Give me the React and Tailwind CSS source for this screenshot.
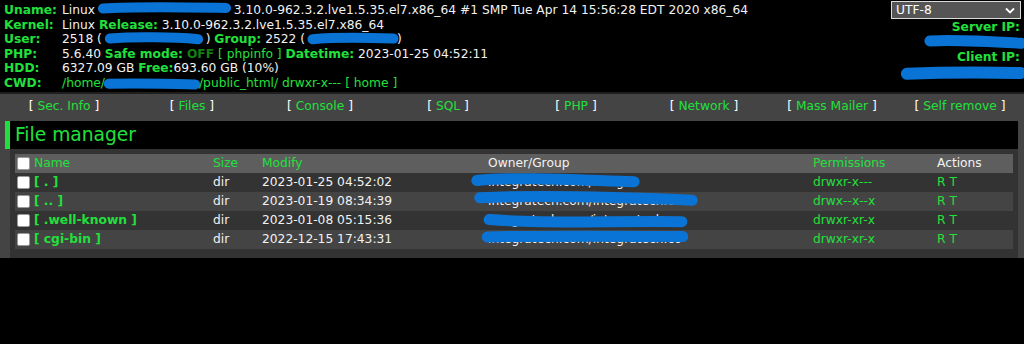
import React from 'react';

const NAV = ['Sec. Info', 'Files', 'Console', 'SQL', 'PHP', 'Network', 'Mass Mailer', 'Self remove'];

const ROWS = [
  { name: '[ . ]', date: '2023-01-25 04:52:02', perms: 'drwxr-x---', owner: 'integratech.com/integra', bg: 'bg-[#333333]', stroke: 'left-[-16px] top-[1px] w-[171px] h-[13px]', d: 'M4 50 C 30 20, 60 45, 96 60' },
  { name: '[ .. ]', date: '2023-01-19 08:34:39', perms: 'drwx--x--x', owner: 'integratech.com/integratech.co', bg: 'bg-[#444444]', stroke: 'left-[-13px] top-[1px] w-[226px] h-[12px]', d: 'M3 40 C 25 20, 60 30, 97 60' },
  { name: '[ .well-known ]', date: '2023-01-08 05:15:36', perms: 'drwxr-xr-x', owner: 'integratech.com/integratech.co', bg: 'bg-[#333333]', stroke: 'left-[-3px] top-[3px] w-[205px] h-[14px]', d: 'M3 40 C 30 70, 60 50, 97 55' },
  { name: '[ cgi-bin ]', date: '2022-12-15 17:43:31', perms: 'drwxr-xr-x', owner: 'integratech.com/integratech.co', bg: 'bg-[#444444]', stroke: 'left-[-5px] top-[2px] w-[208px] h-[9px]', d: 'M3 55 C 30 40, 60 45, 97 50' },
];

function Stroke({ className, d = 'M3 55 C 30 35, 65 45, 97 50', width = 10 }) {
  return (
    <svg className={className} viewBox="0 0 100 100" preserveAspectRatio="none">
      <path d={d} fill="none" stroke="#0a74d6" strokeWidth={width} strokeLinecap="round" vectorEffect="non-scaling-stroke" />
    </svg>
  );
}

function Box() {
  return <span className="inline-block w-[13px] h-[13px] bg-white border border-[#9a9a9a] rounded-[2px] shrink-0" />;
}

export default function App() {
  return (
    <div className="bg-black min-h-[344px] text-[12.25px] text-[#f2f2f2] font-['DejaVu_Sans',Verdana,sans-serif]">
      {/* info */}
      <div className="flex h-[94px] border-b-2 border-[#1e1e1e] leading-[14.6px] whitespace-nowrap">
        <div className="w-[62px] shrink-0 pl-[4px] pt-[3px] font-bold text-[#22e03c]">
          Uname:<br />Kernel:<br />User:<br />PHP:<br />HDD:<br />CWD:
        </div>
        <div className="flex-1 pt-[3px]">
          <div>
            Linux <Stroke className="inline-block align-top overflow-visible w-[131px] h-[11px]" d="M3 50 C 30 30, 70 40, 97 45" /> 3.10.0-962.3.2.lve1.5.35.el7.x86_64 #1 SMP Tue Apr 14 15:56:28 EDT 2020 x86_64
          </div>
          <div>
            Linux <b className="text-[#22e03c]">Release:</b> 3.10.0-962.3.2.lve1.5.35.el7.x86_64
          </div>
          <div>
            2518 ( <Stroke className="inline-block align-top overflow-visible w-[96px] h-[13px]" d="M4 50 C 30 35, 70 40, 96 55" /> ) <b className="text-[#22e03c]">Group:</b> 2522 ({' '}
            <Stroke className="inline-block align-top overflow-visible w-[88px] h-[13px]" d="M4 55 C 30 40, 70 45, 96 50" />)
          </div>
          <div>
            5.6.40 <b className="text-[#22e03c]">Safe mode:</b> <b className="text-[#167d16]">OFF</b> <span className="text-[#22e03c]">[ phpinfo ]</span>{' '}
            <b className="text-[#22e03c]">Datetime:</b> 2023-01-25 04:52:11
          </div>
          <div>
            6327.09 GB <b className="text-[#22e03c]">Free:</b>693.60 GB (10%)
          </div>
          <div className="text-[#22e03c]">
            /home/<Stroke className="inline-block align-top overflow-visible w-[94px] h-[14px]" d="M4 55 C 30 50, 70 55, 96 60" />/public_html/ drwxr-x--- [ home ]
          </div>
        </div>
        <div className="w-[140px] shrink-0 flex flex-col items-end pr-[3px] pt-[1px]">
          <div className="w-[130px] h-[18px] mb-[1px] bg-[#555555] border border-[#dcdcdc] flex items-center justify-between pl-[4px] pr-[5px] text-white">
            <span>UTF-8</span>
            <svg width="10" height="7" viewBox="0 0 10 7">
              <polyline points="1,1.5 5,5.5 9,1.5" fill="none" stroke="#fff" strokeWidth="1.8" />
            </svg>
          </div>
          <b className="text-[#22e03c] pr-[1px]">Server IP:</b>
          <Stroke className="w-[98px] h-[15px] -mr-[3px] overflow-visible" d="M4 40 C 30 30, 70 45, 97 55" width={11} />
          <b className="text-[#22e03c] pr-[1px]">Client IP:</b>
          <Stroke className="w-[122px] h-[15px] -mr-[3px] overflow-visible" d="M4 65 C 20 60, 60 55, 97 60" width={12} />
        </div>
      </div>

      {/* panel */}
      <div className="bg-[#444444]">
        <div className="grid grid-cols-8 h-[27px] items-center pb-[2px] text-center">
          {NAV.map((n) => (
            <div key={n}>
              <span className="text-white">[</span> <span className="text-[#22e03c]">{n}</span> <span className="text-white">]</span>
            </div>
          ))}
        </div>

        <div className="ml-[5px] mr-[6px] h-[28px] bg-black border-l-[5px] border-[#22e03c] pl-[5px] flex items-center text-[18.67px] text-[#22e03c]">
          File manager
        </div>

        <div className="ml-[10px] mr-[6px] bg-[#333333] p-[5px] pb-[9px]">
          <div className="grid grid-cols-[196px_49px_226px_325px_124px_1fr] h-[19px] items-center bg-[#5e5e5e] [&>div]:px-[2px]">
            <div className="flex items-center gap-[4px]"><Box /><span className="text-[#22e03c]">Name</span></div>
            <div className="text-[#22e03c]">Size</div>
            <div className="text-[#22e03c]">Modify</div>
            <div>Owner/Group</div>
            <div className="text-[#22e03c]">Permissions</div>
            <div>Actions</div>
          </div>
          {ROWS.map((r) => (
            <div key={r.name} className={`grid grid-cols-[196px_49px_226px_325px_124px_1fr] h-[19px] items-center ${r.bg} [&>div]:px-[2px]`}>
              <div className="flex items-center gap-[4px]"><Box /><b className="text-[#22e03c]">{r.name}</b></div>
              <div>dir</div>
              <div>{r.date}</div>
              <div className="relative whitespace-nowrap">
                <span>{r.owner}</span>
                <Stroke className={`absolute overflow-visible ${r.stroke}`} d={r.d} width={11} />
              </div>
              <div className="text-[#22e03c]">{r.perms}</div>
              <div className="text-[#22e03c]">R T</div>
            </div>
          ))}
        </div>
      </div>
    </div>
  );
}
